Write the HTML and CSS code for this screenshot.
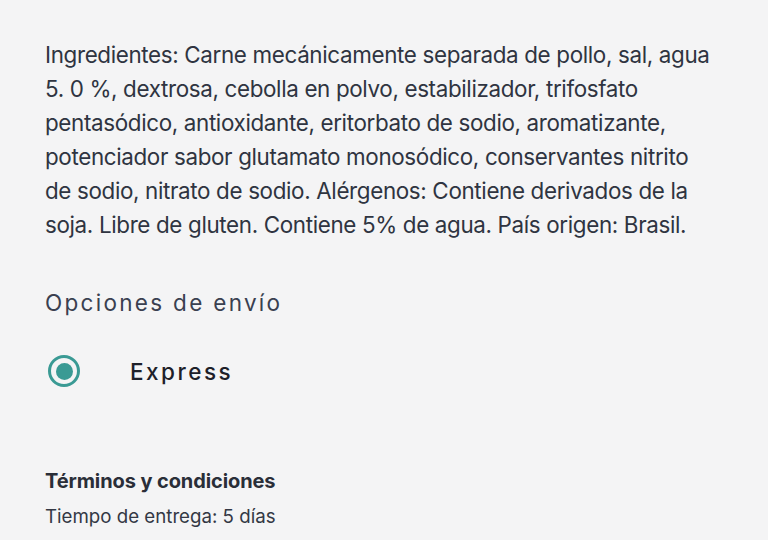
FILE: index.html
```html
<!DOCTYPE html>
<html lang="es">
<head>
<meta charset="utf-8">
<link rel="stylesheet" href="styles.css">
</head>
<body>
<main class="page">
  <p class="ingredients">Ingredientes: Carne mecánicamente separada de pollo, sal, agua 5. 0 %, dextrosa, cebolla en polvo, estabilizador, trifosfato pentasódico, antioxidante, eritorbato de sodio, aromatizante, potenciador sabor glutamato monosódico, conservantes nitrito de sodio, nitrato de sodio. Alérgenos: Contiene derivados de la soja. Libre de gluten. Contiene 5% de agua. País origen: Brasil.</p>
  <h2 class="section-title">Opciones de envío</h2>
  <label class="option">
    <span class="radio"><span class="radio-dot"></span></span>
    <span class="option-label">Express</span>
  </label>
  <h3 class="terms-title">Términos y condiciones</h3>
  <p class="terms-text">Tiempo de entrega: 5 días</p>
</main>
</body>
</html>
```
FILE: styles.css
```css
html, body {
  margin: 0;
  padding: 0;
  background: #f4f4f5;
}
body {
  font-family: Inter, "Noto Sans", sans-serif;
  color: #2f3441;
}
.page {
  padding: 38px 45px 0 45px;
  width: 672px;
  display: flex;
  flex-direction: column;
}
.ingredients {
  margin: 0;
  font-size: 22.4px;
  line-height: 34px;
  letter-spacing: -0.35px;
  color: #2f3441;
}
.section-title {
  margin: 44px 0 0 0;
  font-size: 22.5px;
  font-weight: 400;
  letter-spacing: 2.3px;
  line-height: 34px;
  color: #3a4050;
}
.option {
  display: flex;
  align-items: center;
  gap: 50px;
  margin-top: 35px;
  padding-left: 3px;
}
.radio {
  width: 32px;
  height: 32px;
  box-sizing: border-box;
  border: 3.5px solid #3a9a94;
  border-radius: 50%;
  display: flex;
  align-items: center;
  justify-content: center;
}
.radio-dot {
  width: 17px;
  height: 17px;
  border-radius: 50%;
  background: #3a9a94;
}
.option-label {
  font-size: 22.5px;
  font-weight: 500;
  letter-spacing: 2.5px;
  color: #1d2029;
}
.terms-title {
  margin: 81px 0 0 0;
  font-size: 20px;
  font-weight: 700;
  line-height: 26px;
  letter-spacing: -0.1px;
  color: #2a2e38;
}
.terms-text {
  margin: 10px 0 0 0;
  font-size: 18.7px;
  line-height: 26px;
  color: #333844;
}
```
